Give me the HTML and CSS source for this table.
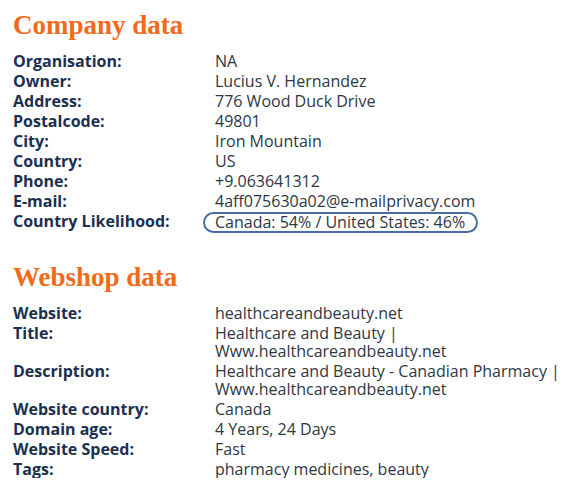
FILE: index.html
```html
<!DOCTYPE html>
<html>
<head>
<meta charset="utf-8">
<link rel="stylesheet" href="styles.css">
</head>
<body>
<section class="block">
  <h2 class="title">Company data</h2>
  <dl class="rows">
    <div class="row"><dt>Organisation:</dt><dd>NA</dd></div>
    <div class="row"><dt>Owner:</dt><dd>Lucius V. Hernandez</dd></div>
    <div class="row"><dt>Address:</dt><dd>776 Wood Duck Drive</dd></div>
    <div class="row"><dt>Postalcode:</dt><dd>49801</dd></div>
    <div class="row"><dt>City:</dt><dd>Iron Mountain</dd></div>
    <div class="row"><dt>Country:</dt><dd>US</dd></div>
    <div class="row"><dt>Phone:</dt><dd>+9.063641312</dd></div>
    <div class="row"><dt>E-mail:</dt><dd>4aff075630a02@e-mailprivacy.com</dd></div>
    <div class="row"><dt>Country Likelihood:</dt><dd><span class="oval">Canada: 54% / United States: 46%</span></dd></div>
  </dl>
</section>
<section class="block second">
  <h2 class="title">Webshop data</h2>
  <dl class="rows">
    <div class="row"><dt>Website:</dt><dd>healthcareandbeauty.net</dd></div>
    <div class="row"><dt>Title:</dt><dd>Healthcare and Beauty |<br>Www.healthcareandbeauty.net</dd></div>
    <div class="row"><dt>Description:</dt><dd>Healthcare and Beauty - Canadian Pharmacy |<br>Www.healthcareandbeauty.net</dd></div>
    <div class="row"><dt>Website country:</dt><dd>Canada</dd></div>
    <div class="row"><dt>Domain age:</dt><dd>4 Years, 24 Days</dd></div>
    <div class="row"><dt>Website Speed:</dt><dd>Fast</dd></div>
    <div class="row"><dt>Tags:</dt><dd>pharmacy medicines, beauty</dd></div>
  </dl>
</section>
</body>
</html>
```
FILE: styles.css
```css
html, body { background: #fff; }
body {
  margin: 0;
  padding: 9px 0 0 13px;
  font-family: "Open Sans", "Liberation Sans", sans-serif;
  font-size: 16px;
}
.title {
  margin: 0 0 11px 0;
  font-family: "Liberation Serif", "DejaVu Serif", serif;
  font-weight: bold;
  font-size: 27px;
  line-height: 32px;
  color: #f26a1b;
}
.second { margin-top: 28px; }
.rows { margin: 0; display: flex; flex-direction: column; gap: 2px; }
.row { display: flex; line-height: 18px; }
dt {
  width: 202px;
  flex: none;
  font-weight: bold;
  color: #1b2f50;
}
dd { margin: 0; color: #2e3744; }
.oval {
  display: inline-block;
  margin-left: -12px;
  padding: 0 11px 0 10px;
  border: 2.5px solid #4a6ca4;
  border-radius: 11px;
  line-height: 17px;
}
```
